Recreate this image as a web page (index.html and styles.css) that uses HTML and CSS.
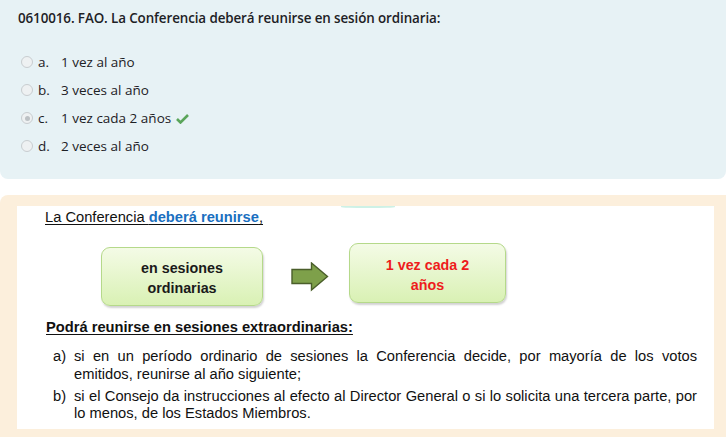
FILE: index.html
```html
<!DOCTYPE html>
<html>
<head>
<meta charset="utf-8">
<link rel="stylesheet" href="styles.css">
</head>
<body>
<div class="question">
  <div class="qtext">0610016. FAO. La Conferencia deberá reunirse en sesión ordinaria:</div>
  <div class="answers">
    <div class="opt"><span class="radio"></span><span class="letter">a.</span><span class="atext">1 vez al año</span></div>
    <div class="opt"><span class="radio"></span><span class="letter">b.</span><span class="atext">3 veces al año</span></div>
    <div class="opt"><span class="radio checked"></span><span class="letter">c.</span><span class="atext">1 vez cada 2 años</span>
      <svg class="tick" width="13" height="11" viewBox="0 0 13 11"><path d="M1 6 L4.5 9.5 L12 2" fill="none" stroke="#5aa55a" stroke-width="2.6" stroke-linejoin="miter"/></svg>
    </div>
    <div class="opt"><span class="radio"></span><span class="letter">d.</span><span class="atext">2 veces al año</span></div>
  </div>
</div>
<div class="feedback">
  <div class="slide">
    <div class="glow"></div>
    <p class="intro"><u>La Conferencia <b class="blue">deberá reunirse</b>,</u></p>
    <div class="diagram">
      <div class="box box1">en sesiones<br>ordinarias</div>
      <svg class="arrow" width="38" height="30" viewBox="0 0 38 30"><path d="M1 7.5 H20.5 V1 L36.5 14.5 L20.5 28 V21.5 H1 Z" fill="#7ea04a" stroke="#4a5e2a" stroke-width="1.4"/></svg>
      <div class="box box2">1 vez cada 2<br>años</div>
    </div>
    <p class="sub"><u>Podrá reunirse en sesiones extraordinarias:</u></p>
    <ol class="list">
      <li><span class="mk">a)</span><span class="just">si en un período ordinario de sesiones la Conferencia decide, por mayoría de los votos emitidos, reunirse al año siguiente;</span></li>
      <li><span class="mk">b)</span><span class="just">si el Consejo da instrucciones al efecto al Director General o si lo solicita una tercera parte, por lo menos, de los Estados Miembros.</span></li>
    </ol>
  </div>
</div>
</body>
</html>
```
FILE: styles.css
```css
html, body { margin: 0; padding: 0; background: #fff; }
body { width: 726px; height: 437px; overflow: hidden; }

.question {
  background: #e7f2f5;
  height: 179px;
  box-sizing: border-box;
  padding: 9px 18px 0 18px;
  border-radius: 0 0 8px 8px;
  font-family: "Open Sans", "Noto Sans", sans-serif;
  color: #1d2125;
}
.qtext {
  font-size: 13.4px;
  font-weight: 600;
  line-height: 18px;
  letter-spacing: -0.1px;
}
.answers { margin-top: 21px; }
.opt {
  display: flex;
  align-items: center;
  height: 28px;
  font-size: 13.5px;
}
.radio {
  width: 10px; height: 10px;
  border: 1px solid #c8cdd0;
  border-radius: 50%;
  background: #eef1f2;
  margin-left: 3px;
  margin-right: 5px;
  box-sizing: content-box;
  position: relative;
}
.radio.checked::after {
  content: "";
  position: absolute;
  left: 2.5px; top: 2.5px;
  width: 5px; height: 5px;
  border-radius: 50%;
  background: #bcc1c4;
}
.letter { width: 23px; }
.tick { margin-left: 5px; margin-top: 1px; }

.feedback {
  margin-top: 16px;
  background: #fcefdc;
  border-radius: 8px 0 0 0;
  height: 242px;
  padding: 11px 0 0 17px;
}
.slide {
  position: relative;
  background: #fff;
  width: 697px;
  height: 223px;
  box-sizing: border-box;
  padding: 2px 0 0 28px;
  font-family: "Liberation Sans", Arial, sans-serif;
  color: #111;
}
.glow {
  position: absolute;
  left: 324px; top: 0;
  width: 54px; height: 2px;
  border-radius: 0 0 50% 50%;
  background: #cdf1e6;
}
.intro {
  margin: 0;
  font-size: 14.7px;
  line-height: 18px;
}
.intro u { text-decoration-thickness: 1px; text-underline-offset: 2px; }
.blue { color: #1a6fc0; }

.diagram {
  display: flex;
  align-items: flex-start;
  margin: 17px 0 0 56px;
}
.box {
  border: 1px solid #b5d98a;
  border-radius: 9px;
  background: linear-gradient(#f4fbe6, #d9f1b4);
  box-shadow: 1px 2px 2px rgba(0,0,0,0.18);
  text-align: center;
  font-family: "Liberation Sans", Arial, sans-serif;
  font-weight: bold;
  font-size: 14.3px;
  line-height: 20px;
  display: flex;
  align-items: center;
  justify-content: center;
  box-sizing: border-box;
  padding-top: 2px;
}
.box1 { width: 162px; height: 59px; margin-top: 4px; color: #1a1a1a; }
.box2 { width: 157px; height: 60px; color: #ee1c1c; padding-top: 4px; }
.arrow { margin: 19px 20px 0 28px; }

.sub {
  margin: 12px 0 0 1px;
  font-size: 14.7px;
  font-weight: bold;
  line-height: 18px;
}
.sub u { text-underline-offset: 2px; }

.list {
  list-style: none;
  margin: 12px 0 0 8px;
  padding: 0;
  width: 644px;
  font-size: 14.7px;
  line-height: 17.5px;
}
.list li {
  display: flex;
  margin-bottom: 4.5px;
}
.mk { width: 21px; flex: none; }
.just { text-align: justify; flex: 1; }
```
